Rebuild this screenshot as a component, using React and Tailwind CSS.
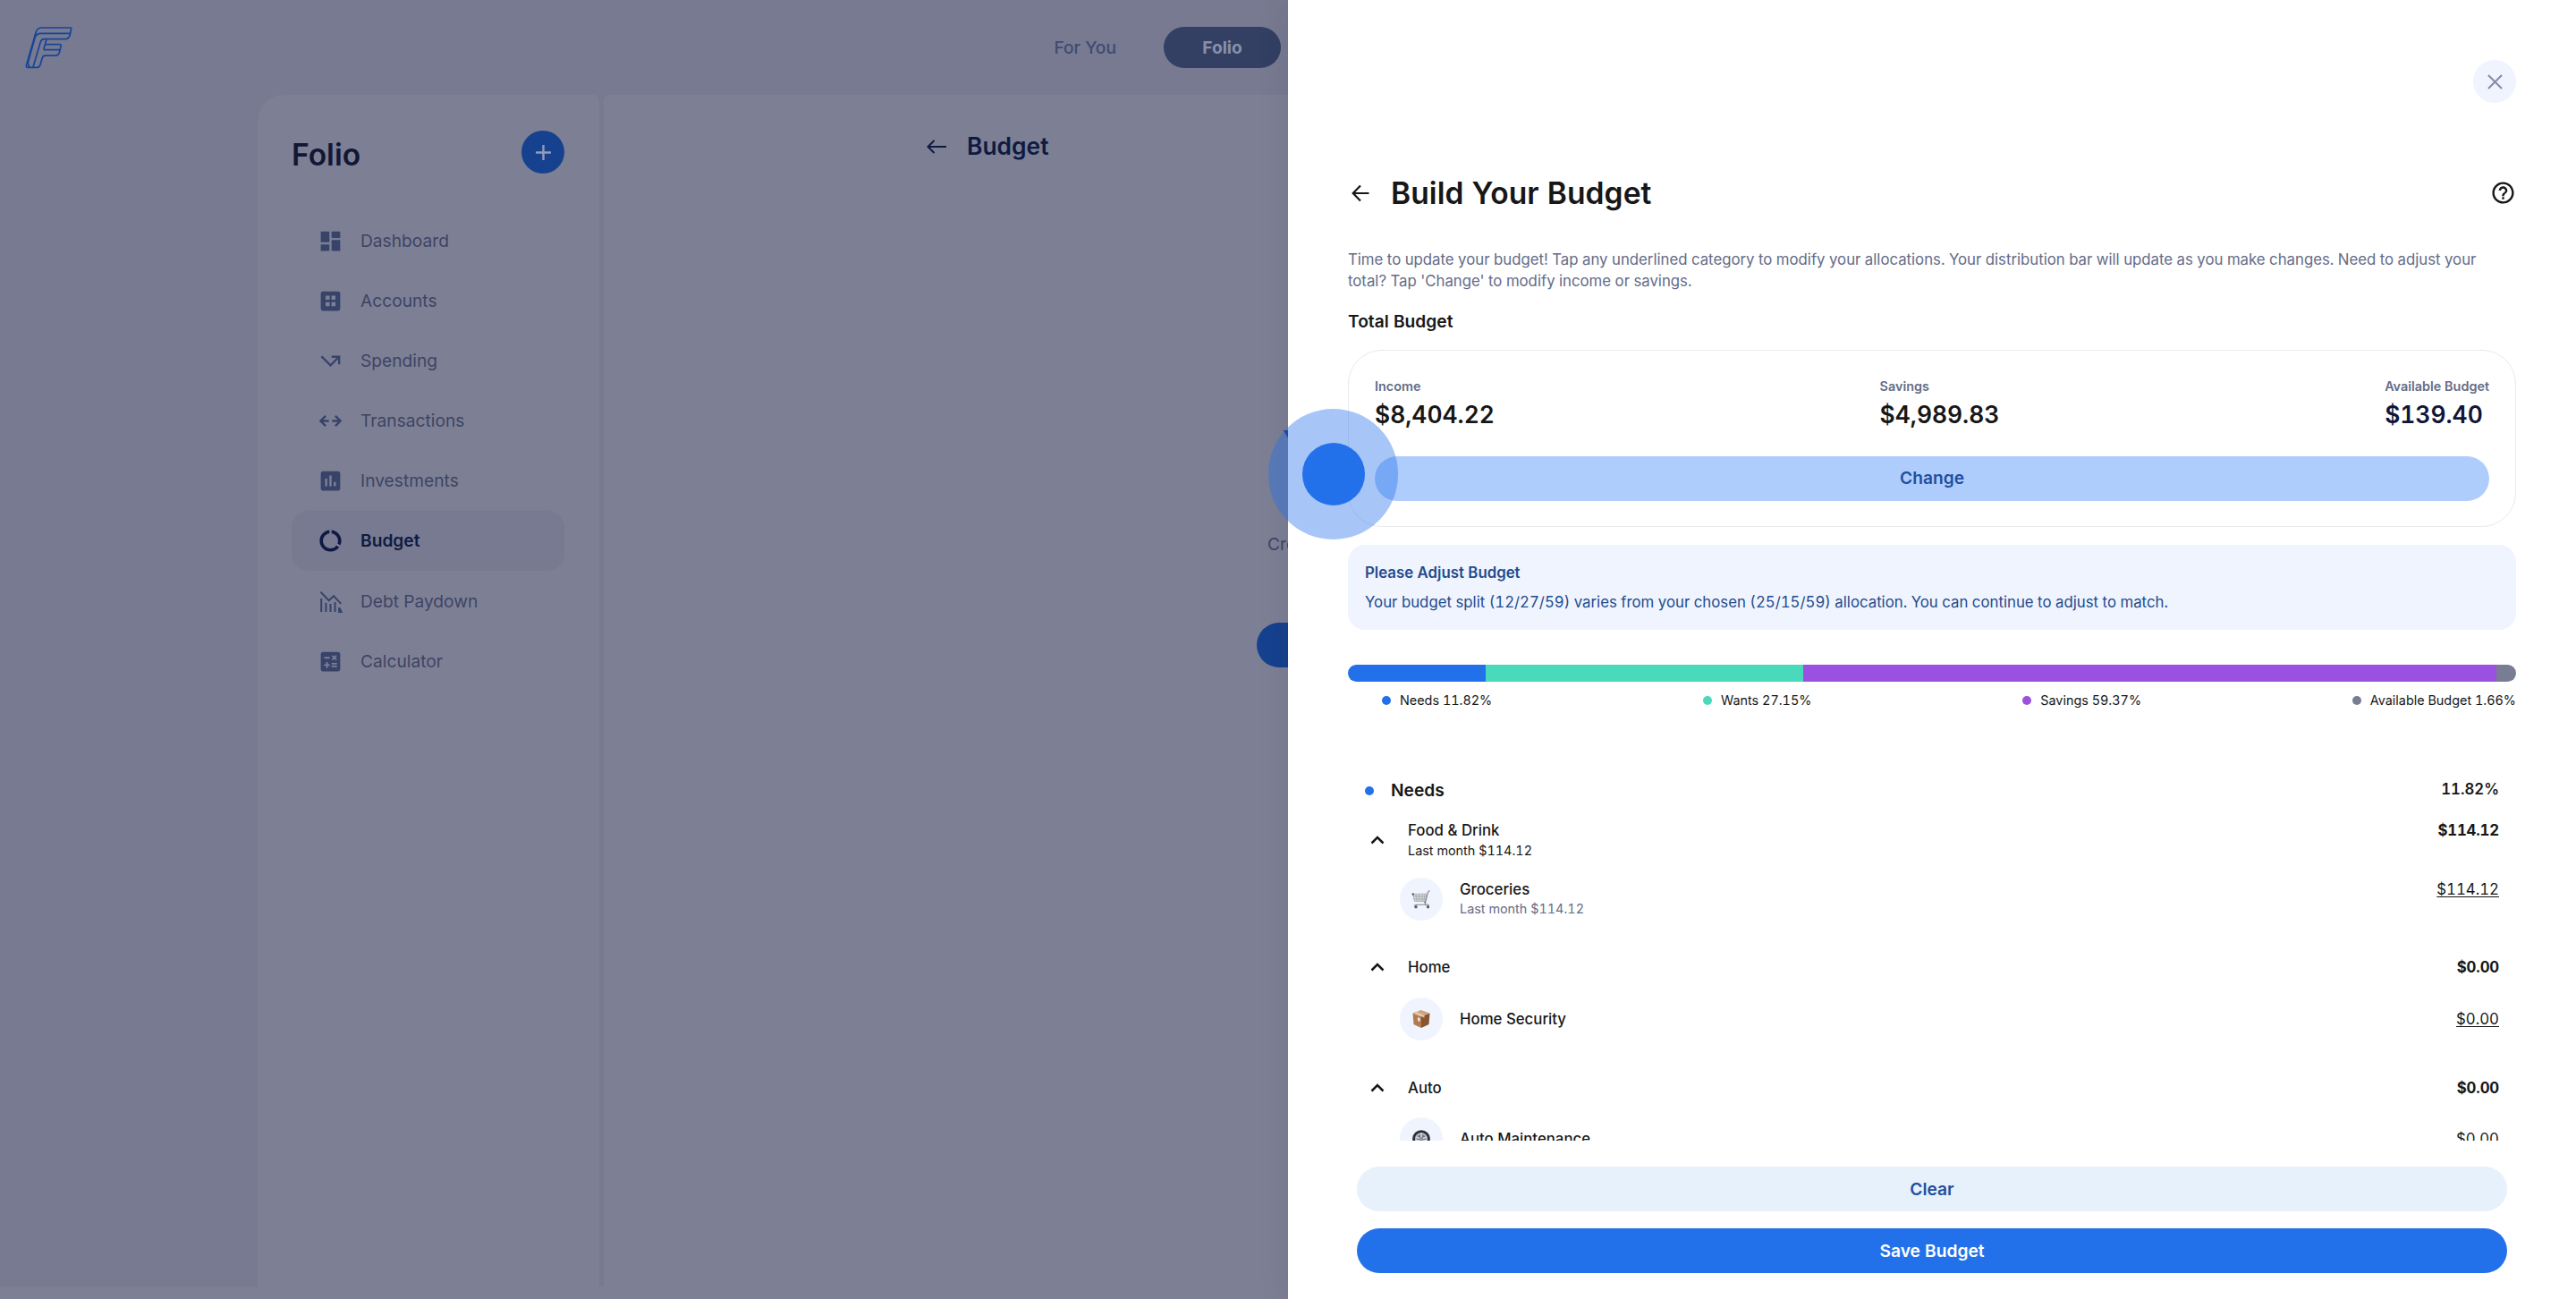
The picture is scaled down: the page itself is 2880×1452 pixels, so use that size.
import {
  MdAdd,
  MdAssessment,
  MdCalculate,
  MdCallMissedOutgoing,
  MdDashboard,
  MdDataUsage,
  MdHelpOutline,
} from 'react-icons/md';

function Logo() {
  return (
    <svg viewBox="0 0 80 80" className="mt-1.5 h-20 w-20" fill="none" stroke="#17459a" strokeWidth="1.7" strokeLinejoin="round">
      <path d="M31 15H62.800Q64 15 63.700 16.300L62.300 22.500Q61.200 27.600 57 27.600H33.500Q30.200 27.600 29.300 31L20.900 59.200" />
      <path d="M31 15Q25.400 15 24.200 20L13.400 57Q13 59.300 15 59.300H25.500Q28.300 59.300 29.200 55.700L31.200 49Q32 46.200 34.500 46.200H45.500Q49.600 46.200 50.600 42L52.200 35.300Q52.400 33.700 51 33.700H35.200" />
      <path d="M63.200 21.300H29.500Q24.400 21.300 23 26.500L15.800 52Q14.500 56 17.300 59.200M24 21.500Q23 24 23 26.500M36 28L33 38.500Q32.700 39.700 34 39.700H51" />
    </svg>
  );
}

function AccountsIcon({ className }) {
  return (
    <svg viewBox="0 0 24 24" className={className} fill="currentColor" fillRule="evenodd">
      <path d="M5 3h14a2 2 0 0 1 2 2v14a2 2 0 0 1-2 2H5a2 2 0 0 1-2-2V5a2 2 0 0 1 2-2Zm2.500 4v3.800h3.700V7Zm5.400 0v3.800h3.700V7Zm-5.400 6v3.800h3.700V13Zm5.400 0v3.800h3.700V13Z" />
    </svg>
  );
}

function TransferIcon({ className }) {
  return (
    <svg viewBox="0 0 24 24" className={className} fill="none" stroke="currentColor" strokeWidth="2">
      <path d="M10.500 12H3.500M7.500 7.300 2.800 12l4.700 4.700M13.500 12h7M16.500 7.300l4.700 4.700-4.700 4.700" />
    </svg>
  );
}

function DebtIcon({ className }) {
  return (
    <svg viewBox="0 0 24 24" className={className} fill="none" stroke="currentColor" strokeWidth="1.700">
      <path d="M2.800 3 10.500 11l4.500-4.300 6.700 7.300" />
      <path d="M3.500 9v12.500M7.800 13v8.500M12 14v7.500M16.200 12.500v9M20 17.500l2 4h-2z" />
    </svg>
  );
}

function Chevron() {
  return (
    <svg viewBox="0 0 16 10" className="h-[10px] w-4 shrink-0" fill="none" stroke="#171717" strokeWidth="2.500">
      <path d="M1.500 8.500 8 2l6.500 6.500" />
    </svg>
  );
}

function CartIcon() {
  return (
    <svg viewBox="0 0 22 22" className="h-[22px] w-[22px]" fill="none">
      <path d="M1.500 5.500 17.500 5l-1.800 8.500H3.500z" fill="#d4d5d8" stroke="#a3a5aa" strokeWidth=".7" />
      <path d="M2 8h15M2.800 11H16M5 5.500l1 8M8.500 5.500l.5 8M12 5.300v8M15 5.300l-1 8" stroke="#9b9da3" strokeWidth=".6" />
      <path d="M20.500 1.500 18.500 3l-3 12M14 14l2 2-1 2M3 18.300l3-1h13v2" stroke="#85878d" strokeWidth="1.100" />
      <circle cx="1.800" cy="5.500" r="1.200" fill="#555" />
      <circle cx="5" cy="19.700" r="1.700" fill="#5d5f66" />
      <circle cx="18.500" cy="19.700" r="1.700" fill="#5d5f66" />
    </svg>
  );
}

function BoxIcon() {
  return (
    <svg viewBox="0 0 22 22" className="h-[22px] w-[22px]">
      <path d="M1.500 4.500 11 8v13L2.500 17z" fill="#b07c50" />
      <path d="M20.500 4.500 11 8v13l8.500-4z" fill="#87552f" />
      <path d="M1.500 4.500 10.500 1l10 3.500L11 8z" fill="#cfa27b" />
      <path d="m5.500 3 9 3.700v3l-3-1.200L3.500 5.300" fill="#e8d0b5" opacity=".8" />
      <path d="m7 9 2.500 1v4L7 13z" fill="#f1e8de" />
    </svg>
  );
}

function TireIcon() {
  return (
    <svg viewBox="0 0 22 22" className="h-[22px] w-[22px]">
      <circle cx="11" cy="11" r="9.800" fill="#2b2e36" />
      <circle cx="11" cy="11" r="7" fill="#b5b8bf" />
      <circle cx="11" cy="11" r="4.800" fill="#73767e" />
      <path d="M11 4.500v13M4.800 9l12.400 4M4.800 13l12.400-4" stroke="#d3d5da" strokeWidth="1.700" />
      <circle cx="11" cy="11" r="2" fill="#8b8e96" />
    </svg>
  );
}

const navItems = [
  { label: 'Dashboard', Icon: MdDashboard },
  { label: 'Accounts', Icon: AccountsIcon },
  { label: 'Spending', Icon: MdCallMissedOutgoing },
  { label: 'Transactions', Icon: TransferIcon },
  { label: 'Investments', Icon: MdAssessment },
  { label: 'Budget', Icon: MdDataUsage, active: true },
  { label: 'Debt Paydown', Icon: DebtIcon },
  { label: 'Calculator', Icon: MdCalculate },
];

const totals = [
  { label: 'Income', value: '$8,404.22', color: 'text-[#171717]' },
  { label: 'Savings', value: '$4,989.83', color: 'text-[#171717]' },
  { label: 'Available Budget', value: '$139.40', color: 'text-[#0f1638]' },
];

const split = [
  { label: 'Needs', pct: 11.82, color: 'bg-[#2271ea]' },
  { label: 'Wants', pct: 27.15, color: 'bg-[#49d9bb]' },
  { label: 'Savings', pct: 59.37, color: 'bg-[#9a50e1]' },
  { label: 'Available Budget', pct: 1.66, color: 'bg-[#787d94]' },
];

function Sidebar() {
  return (
    <aside className="w-[382px] shrink-0 rounded-tl-[29px] rounded-tr-md bg-[#7d8094] pl-[38px] pr-[39px] pt-10">
      <div className="flex h-12 items-start justify-between">
        <h1 className="mt-[7px] text-[33.600px] font-semibold leading-10 text-[#121736]">Folio</h1>
        <span className="flex h-12 w-12 items-center justify-center rounded-full bg-[#16418e]">
          <MdAdd className="h-[29px] w-[29px] text-[#929dbb]" />
        </span>
      </div>
      <nav className="mt-[41px]">
        {navItems.map(({ label, Icon, active }) => (
          <div
            key={label}
            className={`flex h-[67.200px] items-center rounded-[19px] pl-[29px] text-[19.200px] ${
              active ? 'bg-[#777a90] font-semibold text-[#0f1a42]' : 'pt-px text-[#3d4465]'
            }`}
          >
            <Icon className={`h-[29px] w-[29px] ${active ? 'text-[#0f1a42]' : 'text-[#38436a]'}`} />
            <span className="ml-[19px]">{label}</span>
          </div>
        ))}
      </nav>
    </aside>
  );
}

function Page() {
  return (
    <div className="flex w-[1440px] shrink-0 flex-col overflow-hidden bg-[#777a90]">
      <header className="flex h-[106px] shrink-0 items-center justify-between pl-4">
        <Logo />
        <div className="flex items-center pr-2 text-[19.200px]">
          <span className="font-medium text-[#404a72]">For You</span>
          <span className="ml-[53px] flex h-[46px] w-[131px] items-center justify-center rounded-full bg-[#333f63] font-bold text-[#8890a8]">
            Folio
          </span>
        </div>
      </header>
      <div className="flex h-[1332px] shrink-0 pl-[288px]">
        <Sidebar />
        <main className="ml-[5px] flex-1 rounded-tl-md bg-[#7d8094] pt-[42px]">
          <div className="flex h-8 items-center pl-[361px] text-[#0f1a42]">
            <svg viewBox="0 0 22 16" className="h-4 w-[22px]" fill="none" stroke="currentColor" strokeWidth="2">
              <path d="M22 8H1.500M8.500 1 1.500 8l7 7" />
            </svg>
            <h2 className="ml-[23px] text-[26.400px] font-semibold">Budget</h2>
          </div>
          <div className="mt-[294px] whitespace-nowrap text-[#12377f]">
            <p className="pl-[759px] text-[28.800px] font-bold leading-9">Y</p>
            <p className="mt-[84px] pl-[742px] text-[19.200px] leading-7 text-[#3d4465]">Cre</p>
            <div className="ml-[730px] mt-[74px] h-[50px] w-24 rounded-l-full bg-[#16418e]" />
          </div>
        </main>
      </div>
      <div className="flex-1 bg-[#7d8094]" />
    </div>
  );
}

function GroupRow({ name, amount, last }) {
  return (
    <div className="flex items-center pl-[25px] pr-[19px]">
      <Chevron />
      <div className="ml-[26px]">
        <p className="text-[16.800px] font-medium leading-6">{name}</p>
        {last && <p className="mt-px text-[14.400px] leading-5">Last month {last}</p>}
      </div>
      <p className="ml-auto self-start text-[16.800px] font-bold leading-6 tracking-[-0.01em]">{amount}</p>
    </div>
  );
}

function ItemRow({ name, amount, last, children }) {
  return (
    <div className="flex h-12 items-center pl-[58px] pr-[19px]">
      <span className="flex h-12 w-12 items-center justify-center rounded-full bg-[#f0f4ff]">{children}</span>
      <div className="ml-[19px]">
        <p className="text-[16.800px] font-medium leading-6">{name}</p>
        {last && <p className="mb-0.5 text-[14.400px] leading-5 text-[#646c88]">Last month {last}</p>}
      </div>
      <p
        className={`ml-auto text-[16.800px] leading-6 underline underline-offset-2 ${last ? 'mt-px self-start' : ''}`}
      >
        {amount}
      </p>
    </div>
  );
}

function Drawer() {
  return (
    <section className="relative flex w-[1440px] shrink-0 flex-col bg-white text-[#171717] shadow-[0_0_32px_rgba(30,25,60,0.1)]">
      <div className="flex min-h-0 flex-1 flex-col overflow-hidden px-[67px] pt-[67px]">
        <div className="flex shrink-0 justify-end">
          <button className="flex h-12 w-12 items-center justify-center rounded-full bg-[#f0f4ff]">
            <svg viewBox="0 0 18 18" className="h-[17px] w-[17px]" fill="none" stroke="#868da9" strokeWidth="2.200">
              <path d="m1 1 16 16M17 1 1 17" />
            </svg>
          </button>
        </div>

        <div className="mt-[77px] flex h-12 shrink-0 items-center">
          <svg viewBox="0 0 20 20" className="ml-1 h-5 w-5" fill="none" stroke="currentColor" strokeWidth="2.200">
            <path d="M19.500 10H2M10 1.500 1.700 10l8.300 8.500" />
          </svg>
          <h2 className="ml-6 text-[33.600px] font-semibold leading-10 tracking-[0.05px]">Build Your Budget</h2>
          <MdHelpOutline className="mb-px ml-auto h-[29px] w-[29px]" />
        </div>

        <p className="mt-[38px] text-[16.800px] leading-6 tracking-[-0.012px] text-[#646c88]">
          Time to update your budget! Tap any underlined category to modify your allocations. Your distribution bar
          will update as you make changes. Need to adjust your
          <br />
          total? Tap &apos;Change&apos; to modify income or savings.
        </p>

        <h3 className="mt-[19px] text-[19.200px] font-semibold leading-7">Total Budget</h3>
        <div className="mt-[18px] h-[198px] shrink-0 rounded-[38px] border border-[#e9eaee] px-[29px] pt-[30px]">
          <div className="flex justify-between">
            {totals.map((t) => (
              <div key={t.label}>
                <p className="text-[14.400px] font-semibold leading-5 text-[#646c88]">{t.label}</p>
                <p className={`mt-1 text-[26.400px] font-semibold leading-[34px] ${t.color}`}>{t.value}</p>
              </div>
            ))}
          </div>
          <button className="mt-[30px] h-[50px] w-full rounded-full bg-[#afcdfc] pb-0.5 text-[19.200px] font-semibold text-[#1f4f9f]">
            Change
          </button>
        </div>

        <div className="mt-5 h-[95px] shrink-0 rounded-[19px] bg-[#f0f4ff] px-[19px] pt-[19px] text-[16.800px] leading-6 text-[#234b8c]">
          <p className="font-semibold">Please Adjust Budget</p>
          <p className="mt-[9px]">
            Your budget split (12/27/59) varies from your chosen (25/15/59) allocation. You can continue to adjust to
            match.
          </p>
        </div>

        {/* Distribution bar */}
        <div className="mt-[39px] flex h-[19px] shrink-0 overflow-hidden rounded-full">
          {split.map((s) => (
            <div key={s.label} className={s.color} style={{ width: `${s.pct}%` }} />
          ))}
        </div>
        <div className="mt-[11px] flex justify-between text-[14.400px] leading-5">
          {split.map((s) => (
            <div key={s.label} className="flex items-center pl-[38px]">
              <span className={`h-[10px] w-[10px] rounded-full ${s.color}`} />
              <span className="ml-[10px]">
                {s.label} {s.pct}%
              </span>
            </div>
          ))}
        </div>

        <div className="mt-[76px] flex h-7 shrink-0 px-[19px]">
          <span className="mt-[10px] h-[10px] w-[10px] rounded-full bg-[#2271ea]" />
          <h3 className="ml-[19px] text-[19.200px] font-semibold leading-7">Needs</h3>
          <p className="ml-auto text-[16.800px] font-semibold leading-[26px]">11.82%</p>
        </div>

        <div className="mt-[19px] shrink-0">
          <GroupRow name="Food & Drink" amount="$114.12" last="$114.12" />
          <div className="mt-5">
            <ItemRow name="Groceries" amount="$114.12" last="$114.12">
              <CartIcon />
            </ItemRow>
          </div>
        </div>
        <div className="mt-10 shrink-0">
          <GroupRow name="Home" amount="$0.00" />
          <div className="mt-[22px]">
            <ItemRow name="Home Security" amount="$0.00">
              <BoxIcon />
            </ItemRow>
          </div>
        </div>
        <div className="mt-[41px] shrink-0">
          <GroupRow name="Auto" amount="$0.00" />
          <div className="mt-[21px]">
            <ItemRow name="Auto Maintenance" amount="$0.00">
              <TireIcon />
            </ItemRow>
          </div>
        </div>
      </div>

      <footer className="flex shrink-0 flex-col gap-[19px] px-[77px] py-[29px] text-[19.200px] font-semibold">
        <button className="h-[50px] rounded-full bg-[#e7f1fc] text-[#1f4f9f]">Clear</button>
        <button className="h-[50px] rounded-full bg-[#2371ea] text-white">Save Budget</button>
      </footer>

      {/* Tap indicator straddling the drawer edge */}
      <div className="absolute -left-[22px] top-[457px] flex h-[146px] w-[145px] items-center justify-center rounded-full bg-[#2271ea]/40">
        <div className="h-[70px] w-[70px] rounded-full bg-[#2271ea]" />
      </div>
    </section>
  );
}

export default function App() {
  return (
    <div className="flex h-[1452px] w-[2880px] overflow-hidden font-['Inter',sans-serif] tabular-nums">
      <Page />
      <Drawer />
    </div>
  );
}
